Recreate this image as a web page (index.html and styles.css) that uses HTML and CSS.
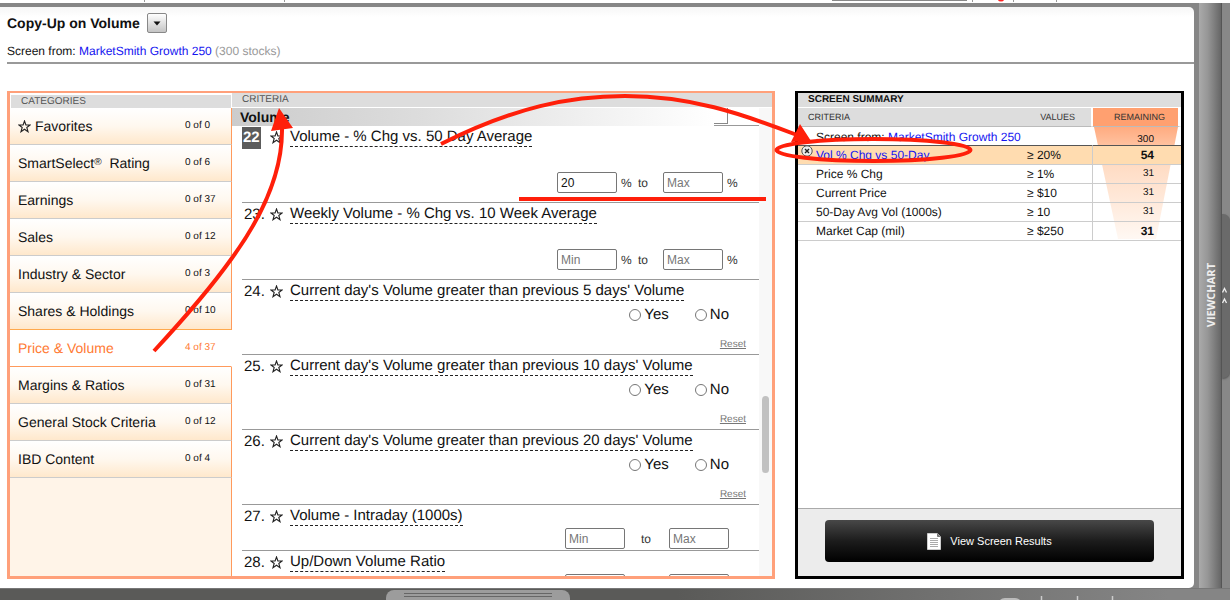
FILE: index.html
```html
<!DOCTYPE html>
<html lang="en">
<head>
<meta charset="utf-8">
<title>Copy-Up on Volume</title>
<link rel="stylesheet" href="styles.css">
</head>
<body>
<svg class="defs" width="0" height="0" aria-hidden="true">
  <symbol id="star" viewBox="0 0 13 13"><path d="M6.5 1 L7.9 5 L12.1 5 L8.8 7.5 L10 11.7 L6.5 9.2 L3 11.7 L4.2 7.5 L0.9 5 L5.1 5 Z" fill="none" stroke="#222" stroke-width="1.1"/></symbol>
</svg>
<div class="toolbar-edge">
  <svg width="1230" height="4" aria-hidden="true">
    <path d="M832 0h135" stroke="#888" stroke-width="2"/>
    <path d="M144.500 0v2M284.500 0v2M972.500 0v2M1013.500 0v2M1056.500 0v2" stroke="#999"/>
    <circle cx="1001" cy="-2" r="3.500" fill="#f22"/>
  </svg>
</div>
<div class="frame">
  <main class="sheet">
    <header class="head">
      <div class="title-row">
        <h1 class="title">Copy-Up on Volume</h1>
        <button class="menu-btn" type="button" aria-label="Screen menu"><svg width="8" height="5"><path d="M0.500 0.500h7l-3.500 4z" fill="#111"/></svg></button>
      </div>
      <p class="source">Screen from: <a class="link" href="#">MarketSmith Growth 250</a> <span class="muted">(300 stocks)</span></p>
    </header>
    <div class="panels">
      <section class="builder">
        <nav class="cats">
          <h2 class="cats-head">CATEGORIES</h2>
          <a class="cat" href="#"><span class="cat-name"><svg class="star" width="13" height="13"><use href="#star"/></svg> Favorites</span><span class="count">0 of 0</span></a>
          <a class="cat" href="#"><span class="cat-name">SmartSelect<sup class="reg">®</sup>&nbsp; Rating</span><span class="count">0 of 6</span></a>
          <a class="cat" href="#"><span class="cat-name">Earnings</span><span class="count">0 of 37</span></a>
          <a class="cat" href="#"><span class="cat-name">Sales</span><span class="count">0 of 12</span></a>
          <a class="cat" href="#"><span class="cat-name">Industry &amp; Sector</span><span class="count">0 of 3</span></a>
          <a class="cat before-active" href="#"><span class="cat-name">Shares &amp; Holdings</span><span class="count">0 of 10</span></a>
          <a class="cat active" href="#"><span class="cat-name">Price &amp; Volume</span><span class="count">4 of 37</span></a>
          <a class="cat" href="#"><span class="cat-name">Margins &amp; Ratios</span><span class="count">0 of 31</span></a>
          <a class="cat" href="#"><span class="cat-name">General Stock Criteria</span><span class="count">0 of 12</span></a>
          <a class="cat" href="#"><span class="cat-name">IBD Content</span><span class="count">0 of 4</span></a>
          <div class="cats-fill"></div>
        </nav>
        <div class="criteria">
          <h2 class="criteria-head">CRITERIA</h2>
          <div class="scroller">
            <div class="list">
              <div class="group"><h3 class="group-name">Volume</h3><div class="group-end"><div class="stub"></div></div></div>
              <div class="item">
                <div class="item-title"><span class="num current">22</span><svg class="star" width="13" height="13"><use href="#star"/></svg><span class="name">Volume - % Chg vs. 50 Day Average</span></div>
                <div class="range"><input class="box" aria-label="Minimum 50 day change" value="20"><span class="pct">%</span><span class="to">to</span><input class="box" aria-label="Maximum 50 day change" placeholder="Max"><span class="pct">%</span></div>
              </div>
              <div class="item">
                <div class="item-title"><span class="num">23.</span><svg class="star" width="13" height="13"><use href="#star"/></svg><span class="name">Weekly Volume - % Chg vs. 10 Week Average</span></div>
                <div class="range"><input class="box" aria-label="Minimum 10 week change" placeholder="Min"><span class="pct">%</span><span class="to">to</span><input class="box" aria-label="Maximum 10 week change" placeholder="Max"><span class="pct">%</span></div>
              </div>
              <div class="item yes-no">
                <div class="item-title"><span class="num">24.</span><svg class="star" width="13" height="13"><use href="#star"/></svg><span class="name">Current day's Volume greater than previous 5 days' Volume</span></div>
                <div class="choice"><label class="opt"><input class="radio" type="radio" name="d5">Yes</label><label class="opt"><input class="radio" type="radio" name="d5">No</label></div>
                <a class="reset" href="#">Reset</a>
              </div>
              <div class="item yes-no">
                <div class="item-title"><span class="num">25.</span><svg class="star" width="13" height="13"><use href="#star"/></svg><span class="name">Current day's Volume greater than previous 10 days' Volume</span></div>
                <div class="choice"><label class="opt"><input class="radio" type="radio" name="d10">Yes</label><label class="opt"><input class="radio" type="radio" name="d10">No</label></div>
                <a class="reset" href="#">Reset</a>
              </div>
              <div class="item yes-no">
                <div class="item-title"><span class="num">26.</span><svg class="star" width="13" height="13"><use href="#star"/></svg><span class="name">Current day's Volume greater than previous 20 days' Volume</span></div>
                <div class="choice"><label class="opt"><input class="radio" type="radio" name="d20">Yes</label><label class="opt"><input class="radio" type="radio" name="d20">No</label></div>
                <a class="reset" href="#">Reset</a>
              </div>
              <div class="item short">
                <div class="item-title"><span class="num">27.</span><svg class="star" width="13" height="13"><use href="#star"/></svg><span class="name">Volume - Intraday (1000s)</span></div>
                <div class="range plain"><input class="box" aria-label="Minimum intraday volume" placeholder="Min"><span class="to">to</span><input class="box" aria-label="Maximum intraday volume" placeholder="Max"></div>
              </div>
              <div class="item short">
                <div class="item-title"><span class="num">28.</span><svg class="star" width="13" height="13"><use href="#star"/></svg><span class="name">Up/Down Volume Ratio</span></div>
                <div class="range plain"><input class="box" aria-label="Minimum volume ratio"><span class="to"></span><input class="box" aria-label="Maximum volume ratio"></div>
              </div>
            </div>
            <div class="track"><div class="thumb"></div></div>
          </div>
        </div>
      </section>
      <section class="summary">
        <h2 class="summary-head">SCREEN SUMMARY</h2>
        <div class="summary-body">
          <svg class="funnel" width="84" height="112" aria-hidden="true">
            <defs><linearGradient id="fade" x1="0" y1="0" x2="0" y2="1"><stop offset="0" stop-color="#ffab80"/><stop offset="0.350" stop-color="#ffdcc4"/><stop offset="1" stop-color="#fff8f3"/></linearGradient></defs>
            <path d="M0 0H84L62 112H24Z" fill="url(#fade)"/>
          </svg>
          <table class="sum">
            <thead><tr><th class="c-name">CRITERIA</th><th class="c-val">VALUES</th><th class="c-rem">REMAINING</th></tr></thead>
            <tbody>
              <tr class="from"><td colspan="2" class="c-name">Screen from: <a class="link" href="#">MarketSmith Growth 250</a></td><td class="c-rem"><span class="remain">300</span></td></tr>
              <tr class="hot"><td class="c-name"><button class="remove" type="button" aria-label="Remove criterion"><svg width="12" height="12"><circle cx="6" cy="6" r="5.200" fill="#eee" stroke="#555"/><path d="M4 4l4 4M8 4l-4 4" stroke="#222" stroke-width="1.400"/></svg></button><a class="link" href="#">Vol % Chg vs 50-Day</a></td><td class="c-val">≥ 20%</td><td class="c-rem strong">54</td></tr>
              <tr><td class="c-name">Price % Chg</td><td class="c-val">≥ 1%</td><td class="c-rem">31</td></tr>
              <tr><td class="c-name">Current Price</td><td class="c-val">≥ $10</td><td class="c-rem">31</td></tr>
              <tr><td class="c-name">50-Day Avg Vol (1000s)</td><td class="c-val">≥ 10</td><td class="c-rem">31</td></tr>
              <tr><td class="c-name">Market Cap (mil)</td><td class="c-val">≥ $250</td><td class="c-rem strong">31</td></tr>
            </tbody>
          </table>
        </div>
        <footer class="summary-foot">
          <button class="go" type="button"><svg width="14" height="17" aria-hidden="true"><path d="M0.500 0.500H10.500L13.500 3.500V16.500H0.500Z" fill="#fff" stroke="#ccc"/><path d="M10.500 0.500V3.500H13.500" fill="#777" stroke="#777"/><path d="M3 5.500h8M3 7.500h8M3 9.500h8M3 11.500h8M3 13.500h8" stroke="#aaa"/></svg>View Screen Results</button>
        </footer>
      </section>
    </div>
  </main>
  <aside class="rail">
    <div class="rail-bar"><button class="viewchart" type="button">VIEWCHART</button></div>
    <div class="rail-edge"><div class="rail-tab"><svg width="6" height="18" aria-hidden="true"><path d="M0.500 5.500L2.500 1.500L4.500 5.500M0.500 16L2.500 12L4.500 16" fill="none" stroke="#eee" stroke-width="1.300"/></svg></div></div>
  </aside>
</div>
<div class="dock">
  <div class="handle"><div class="grip"></div></div>
  <svg class="dock-marks" width="120" height="4" aria-hidden="true"><path d="M0 4Q2 2 5 2H15Q18 2 20 4Z" fill="#bbb"/><path d="M41.500 0v4M77.500 0v4M112.500 0v4" stroke="#ccc" stroke-width="1.500"/></svg>
</div>
<svg class="notes" width="1230" height="600" aria-hidden="true">
  <g fill="none" stroke="#ff1f0a" stroke-width="4">
    <path d="M154 351Q205 296 232 258Q283 188 282 128"/>
    <path d="M441 144C515 107 570 96 625 96C690 96 740 113 797 135"/>
    <ellipse cx="873.500" cy="150" rx="97" ry="11"/>
    <path d="M519 199H766"/>
  </g>
  <path d="M279 108L271 131L293 128ZM811 141L800 124L791 142Z" fill="#ff1f0a"/>
</svg>
</body>
</html>
```
FILE: styles.css
```css
* { box-sizing: border-box; }
body {
  margin: 0;
  height: 100vh;
  display: flex;
  flex-direction: column;
  overflow: hidden;
  position: relative;
  background: #fff;
  color: #111;
  font: 12px/16px "Liberation Sans", Arial, sans-serif;
  text-rendering: geometricPrecision;
}
h1, h2, h3, p { margin: 0; }
a { color: inherit; text-decoration: none; }
button { font: inherit; border: 0; padding: 0; background: none; }
.defs { position: absolute; }
.link { color: #1414f0; }
.muted { color: #999; }
.star { flex: none; }

.toolbar-edge { height: 3px; overflow: hidden; flex: none; }
.toolbar-edge svg { display: block; }
.frame { flex: 1; min-height: 0; display: flex; background: #868686; }
.sheet {
  flex: 1;
  min-width: 0;
  margin-top: 4px;
  padding: 6px 10px 9px 7px;
  display: flex;
  flex-direction: column;
  border-radius: 0 5px 5px 0;
  background: linear-gradient(#f6f6f6, #fff 10px);
}
.head { border-bottom: 2px solid #999; margin-right: -10px; padding-bottom: 3px; }
.title-row { display: flex; align-items: center; gap: 7px; height: 20px; }
.title { font-size: 14px; line-height: 20px; }
.menu-btn {
  width: 20px;
  height: 20px;
  display: grid;
  place-items: center;
  border: 1px solid #888;
  border-radius: 2px;
  background: linear-gradient(#fff, #c4c4c4);
}
.source { padding-top: 10px; }

.panels { flex: 1; min-height: 0; display: flex; gap: 20px; padding-top: 27px; }
.builder { flex: 1; min-width: 0; display: flex; border: 3px solid #ffa07a; border-top-width: 2px; }

.cats { width: 222px; flex: none; display: flex; flex-direction: column; }
.cats-head, .criteria-head { font-size: 10px; font-weight: normal; color: #555; background: #ddd; }
.cats-head { line-height: 13px; padding-left: 10px; margin: 2px 1px 0; }
.cat {
  height: 37px;
  flex: none;
  display: flex;
  align-items: center;
  padding-left: 8px;
  border-right: 1px solid #ff9a5c;
  border-bottom: 1px solid #ccc;
  background: linear-gradient(#fff, #fff8ef 50%, #ffe8cc);
  font-size: 14px;
}
.cat-name { width: 167px; display: flex; align-items: center; white-space: pre; }
.reg { font-size: 10px; line-height: 16px; align-self: flex-start; }
.count { font-size: 10px; }
.before-active { border-bottom-color: #ffa94d; }
.active { background: #fff; color: #ff7a33; border-right-color: #fff; border-bottom-color: #ff9a5c; }
.cats-fill { flex: 1; border-right: 1px solid #ff9a5c; background: #fff4e8; }

.criteria { flex: 1; min-width: 0; display: flex; flex-direction: column; }
.criteria-head { line-height: 14px; padding-left: 10px; border-bottom: 1px solid #fff; height: 15px; }
.scroller { flex: 1; min-height: 0; display: flex; }
.list { flex: 1; min-width: 0; overflow: hidden; padding-left: 10px; }
.track { width: 13px; display: flex; flex-direction: column; align-items: center; background: #f8f8f8; }
.track::before { content: ""; flex: 289; }
.track::after { content: ""; flex: 103; }
.thumb { width: 7px; flex: 77; border-radius: 4px; background: #c1c1c1; }
.group { display: flex; height: 18px; margin-left: -10px; }
.group-name {
  flex: 1;
  padding-left: 8px;
  font-size: 14px;
  line-height: 18px;
  background: linear-gradient(90deg, #ccc, #ddd 40%, #fff);
}
.group-end { width: 45px; border-bottom: 1px solid #999; }
.stub { width: 14px; height: 16px; border: solid #888; border-width: 0 1px 1px 0; }

.item { height: 77px; padding-top: 2px; border-bottom: 1px solid #999; display: flex; flex-direction: column; }
.yes-no { height: 75px; }
.short { height: 46px; }
.item-title { display: flex; align-items: center; height: 19px; font-size: 15px; line-height: 18px; white-space: nowrap; }
.item-title .star { margin-right: 7px; }
.num { width: 26px; margin-right: 2px; padding-left: 2px; }
.current { width: 19px; margin-right: 9px; padding-left: 1px; line-height: 22px; background: #5c5c5c; color: #fff; font-weight: bold; }
.name { border-bottom: 1px dashed #222; }
.range { display: flex; align-items: center; justify-content: flex-end; margin-top: auto; padding: 0 21px 9px 0; color: #333; }
.box {
  width: 60px;
  height: 21px;
  padding: 0 3px;
  border: 1px solid #767676;
  border-radius: 2px;
  background: #fff;
  color: #111;
  font: 12px "Liberation Sans", Arial, sans-serif;
}
.box::placeholder { color: #777; }
.pct { width: 11px; margin-left: 4px; }
.to { width: 10px; margin: 0 15px 0 6px; }
.plain { padding: 0 30px 1px 0; }
.plain .to { margin: 0 18px 0 16px; }
.choice { display: flex; justify-content: flex-end; gap: 26px; margin-top: 5px; padding-right: 30px; font-size: 15px; line-height: 18px; }
.opt { display: flex; align-items: center; gap: 3px; }
.radio { width: 12px; height: 12px; margin: 0; appearance: none; border: 1px solid #767676; border-radius: 50%; background: #fff; }
.reset { margin: auto 13px 2px auto; font-size: 10px; line-height: 14px; color: #777; text-decoration: underline; }

.summary { width: 389px; flex: none; display: flex; flex-direction: column; border: 3px solid #000; border-top-width: 2px; }
.summary-head { padding-left: 10px; font-size: 10px; line-height: 14px; background: #ddd; border-bottom: 1px solid #fff; }
.summary-body { flex: 1; position: relative; }
.funnel { position: absolute; top: 19px; right: 3px; }
.sum { position: relative; width: 100%; border-collapse: separate; border-spacing: 0; table-layout: fixed; }
.sum th { height: 19px; padding: 0; font-size: 9px; font-weight: normal; line-height: 17px; color: #333; background: #ddd; border-bottom: 1px solid #bbb; }
.sum th.c-name { padding-left: 10px; text-align: left; }
.sum th.c-val { text-align: right; padding-right: 16px; width: 68px; border-right: 1px solid #fff; }
.sum th.c-rem { text-align: right; padding-right: 13px; width: 89px; background: #ffa070; border-left: 1px solid #fff; border-right: 3px solid #fff; }
.sum td { height: 19px; padding: 0; line-height: 18px; border-bottom: 1px solid #ccc; }
.sum td.c-name { padding-left: 18px; }
.sum td.c-val { padding-left: 3px; }
.sum td.c-rem { padding-right: 27px; text-align: right; font-size: 10px; border-left: 1px solid #ccc; }
.sum .from td { border-bottom-color: #555; line-height: 16px; vertical-align: bottom; }
.sum .from td.c-rem { border-left-color: transparent; line-height: 11px; }
.sum .hot td { background: #ffdcb0; }
.sum td.strong { font-size: 12px; font-weight: bold; }
.hot .c-name { position: relative; }
.remove { position: absolute; left: 3px; top: -1px; line-height: 0; }
.summary-foot { padding: 11px 27px 14px; background: #ececec; border-top: 1px solid #aaa; }
.go {
  width: 100%;
  height: 42px;
  display: flex;
  align-items: center;
  justify-content: center;
  gap: 9px;
  border-radius: 4px;
  background: linear-gradient(#484848, #1c1c1c 50%, #000);
  color: #fff;
  font-size: 11px;
}

.rail { width: 36px; flex: none; display: flex; padding-left: 5px; }
.rail-bar { width: 22px; display: flex; align-items: center; justify-content: center; background: linear-gradient(90deg, #aaa, #969696 40%, #666); }
.viewchart {
  writing-mode: vertical-rl;
  transform: rotate(180deg);
  color: #eee;
  font: bold 11px "Open Sans", sans-serif;
}
.rail-edge { flex: 1; display: flex; align-items: center; background: #888; border-left: 1px solid #555; }
.rail-tab {
  width: 100%;
  height: 164px;
  display: grid;
  align-items: center;
  justify-items: start;
  border-radius: 0 7px 7px 0;
  background: #6a6a6a;
  box-shadow: 0 1px 2px #555;
}

.dock { height: 12px; flex: none; display: flex; align-items: flex-end; justify-content: center; position: relative; background: linear-gradient(90deg, #5a5a58 55%, #858585 95%); border-top: 1px solid #777; }
.handle { width: 184px; height: 10px; margin-right: 274px; padding-top: 3px; border-radius: 8px 8px 0 0; background: #9c9c9c; }
.grip { height: 4px; margin: 0 18px; border: solid #666; border-width: 1px 0; }
.dock-marks { position: absolute; right: 110px; bottom: 0; }
.notes { position: absolute; left: 0; top: 0; pointer-events: none; }
```
